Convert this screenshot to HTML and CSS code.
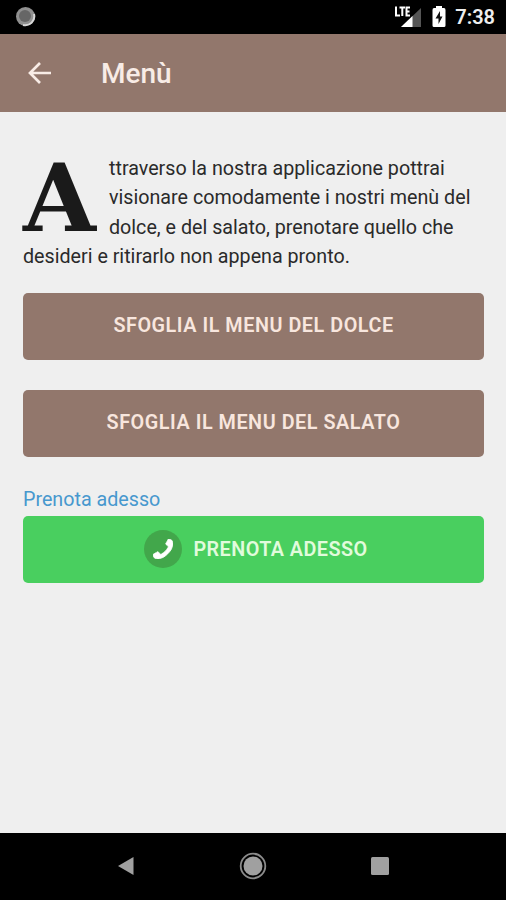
FILE: index.html
```html
<!DOCTYPE html>
<html lang="it">
<head>
<meta charset="utf-8">
<title>Menù</title>
<link rel="stylesheet" href="styles.css">
</head>
<body>
<div class="status">
  <svg class="sync" width="22" height="22" viewBox="0 0 22 22"><circle cx="11.500" cy="10.500" r="9.500" fill="#909090"/><path d="M20 8A9 9 0 0 1 9 19" fill="none" stroke="#d8d8d8" stroke-width="2"/><circle cx="11" cy="10" r="6" fill="#666"/></svg>
  <svg class="signal" width="28" height="24" viewBox="0 0 28 24"><path d="M27 3V22H7Z" fill="#555"/><path d="M18.500 11V22H7Z" fill="#fff"/><path d="M2 1.500V10.500H6M5.500 2.500H11M8.300 2.500V11M16 2.500H12.500V10.500H16M12.500 6.500H15.500" fill="none" stroke="#fff" stroke-width="2"/></svg>
  <svg class="battery" width="14" height="22" viewBox="0 0 14 22"><path d="M4 0H10V2H12Q13.500 2 13.500 4V19.500Q13.500 21 12 21H2Q.5 21 .5 19.500V4Q.5 2 2 2H4Z" fill="#fff"/><path d="M8 5L3.500 12.500H6.500V18L10.500 10.500H8Z" fill="#111"/></svg>
  <span class="clock">7:38</span>
</div>
<header class="bar">
  <svg class="back" width="24" height="24" viewBox="0 0 24 24"><path d="M23 12H2.500M12 2L2 12L12 22" fill="none" stroke="#f8ece6" stroke-width="2.700"/></svg>
  <h1 class="title">Menù</h1>
</header>
<main class="content">
  <p class="intro"><span class="cap">A</span>ttraverso la nostra applicazione pottrai<br>visionare comodamente i nostri menù del<br>dolce, e del salato, prenotare quello che<br>desideri e ritirarlo non appena pronto.</p>
  <a class="button">SFOGLIA IL MENU DEL DOLCE</a>
  <a class="button second">SFOGLIA IL MENU DEL SALATO</a>
  <a class="link">Prenota adesso</a>
  <a class="button call"><span class="phone"><svg width="20" height="20" viewBox="192 128 1408 1408"><path transform="translate(1792 0) scale(-1 1)" fill="#fff" stroke="#fff" stroke-width="60" d="M1600 1240q0 27-10 70.500t-20.500 68.500q-21 50-122 106-94 51-186 51-27 0-53-3.500t-57.500-12.500-47-14.500-55.500-20.500-49-18q-98-35-175-83-127-79-264-216t-216-264q-48-77-83-175-3-9-18-49t-20.500-55.500-14.500-47-12.500-57.500-3.500-53q0-92 51-186 56-101 106-122 25-10 68.500-20.500t70.500-10.500q14 0 21 3 18 6 53 76 11 19 30 54t35 63.500 31 53.500q3 4 17.500 25t21.500 35.500 7 28.500q0 20-28.500 50t-62 55-62 53-28.500 46q0 9 5 22.500t8.500 20.500 14 24 11.500 19q76 137 174 235t235 174q2 1 19 11.500t24 14 20.500 8.500 22.500 5q18 0 46-28.500t53-62 55-62 50-28.500q14 0 28.500 7t35.500 21.500 25 17.500q25 15 53.500 31t63.500 35 54 30q70 35 76 53 3 7 3 21z"/></svg></span><span>PRENOTA ADESSO</span></a>
</main>
<nav class="nav">
  <svg width="28" height="28" viewBox="0 0 28 28"><path d="M6 14L21.500 5V23Z" fill="#a0a0a0"/></svg>
  <svg width="28" height="28" viewBox="0 0 28 28"><circle cx="14" cy="14" r="12.300" fill="none" stroke="#8b8b8b" stroke-width="1.800"/><circle cx="14" cy="14" r="9.500" fill="#a0a0a0"/></svg>
  <svg width="28" height="28" viewBox="0 0 28 28"><rect x="5" y="5" width="18" height="18" rx="1.500" fill="#a0a0a0"/></svg>
</nav>
</body>
</html>
```
FILE: styles.css
```css
* { box-sizing: border-box; }
body {
  margin: 0;
  height: 900px;
  display: flex;
  flex-direction: column;
  overflow: hidden;
  background: #efefef;
  font-family: Roboto, sans-serif;
  color: #2a2a2a;
}
.status {
  height: 34px;
  flex: none;
  display: flex;
  align-items: center;
  padding: 0 11px 0 14px;
  background: #000;
}
.signal { margin-left: auto; }
.battery { margin-left: 10px; }
.clock {
  margin-left: 9px;
  font-size: 20px;
  font-weight: 600;
  line-height: 34px;
  color: #eee;
}
.bar {
  height: 78px;
  flex: none;
  display: flex;
  align-items: center;
  padding-left: 28px;
  background: #92776c;
}
.title {
  margin: 0 0 0 49px;
  font-size: 28px;
  font-weight: 500;
  color: #f8ece6;
}
.content {
  flex: 1;
  display: flex;
  flex-direction: column;
  padding: 41.500px 22px 0 23px;
}
.intro {
  margin: 0 0 21.500px;
  font-size: 19.700px;
  line-height: 29.500px;
  white-space: nowrap;
}
.cap {
  float: left;
  width: 86px;
  height: 88px;
  font-family: "DejaVu Serif", serif;
  font-weight: 700;
  font-size: 94px;
  line-height: 89px;
  color: #1a1a1a;
}
.button {
  height: 67px;
  flex: none;
  display: flex;
  align-items: center;
  justify-content: center;
  padding-bottom: 2px;
  border-radius: 5px;
  background: #92776c;
  color: #f8e6de;
  font-size: 19.800px;
  font-weight: 600;
  letter-spacing: 0.540px;
}
.second { margin-top: 30px; }
.link {
  margin-top: 28px;
  height: 31px;
  line-height: 30px;
  font-size: 19.700px;
  color: #4798ce;
}
.call {
  gap: 11px;
  padding-left: 5px;
  padding-bottom: 1px;
  letter-spacing: 0.450px;
  background: #49cf5f;
  color: #e1fbdc;
}
.phone {
  width: 38px;
  height: 38px;
  display: flex;
  align-items: center;
  justify-content: center;
  border-radius: 50%;
  background: #42a74b;
}
.nav {
  height: 67px;
  flex: none;
  display: flex;
  align-items: center;
  justify-content: center;
  gap: 99px;
  padding-bottom: 1px;
  background: #000;
}
```
